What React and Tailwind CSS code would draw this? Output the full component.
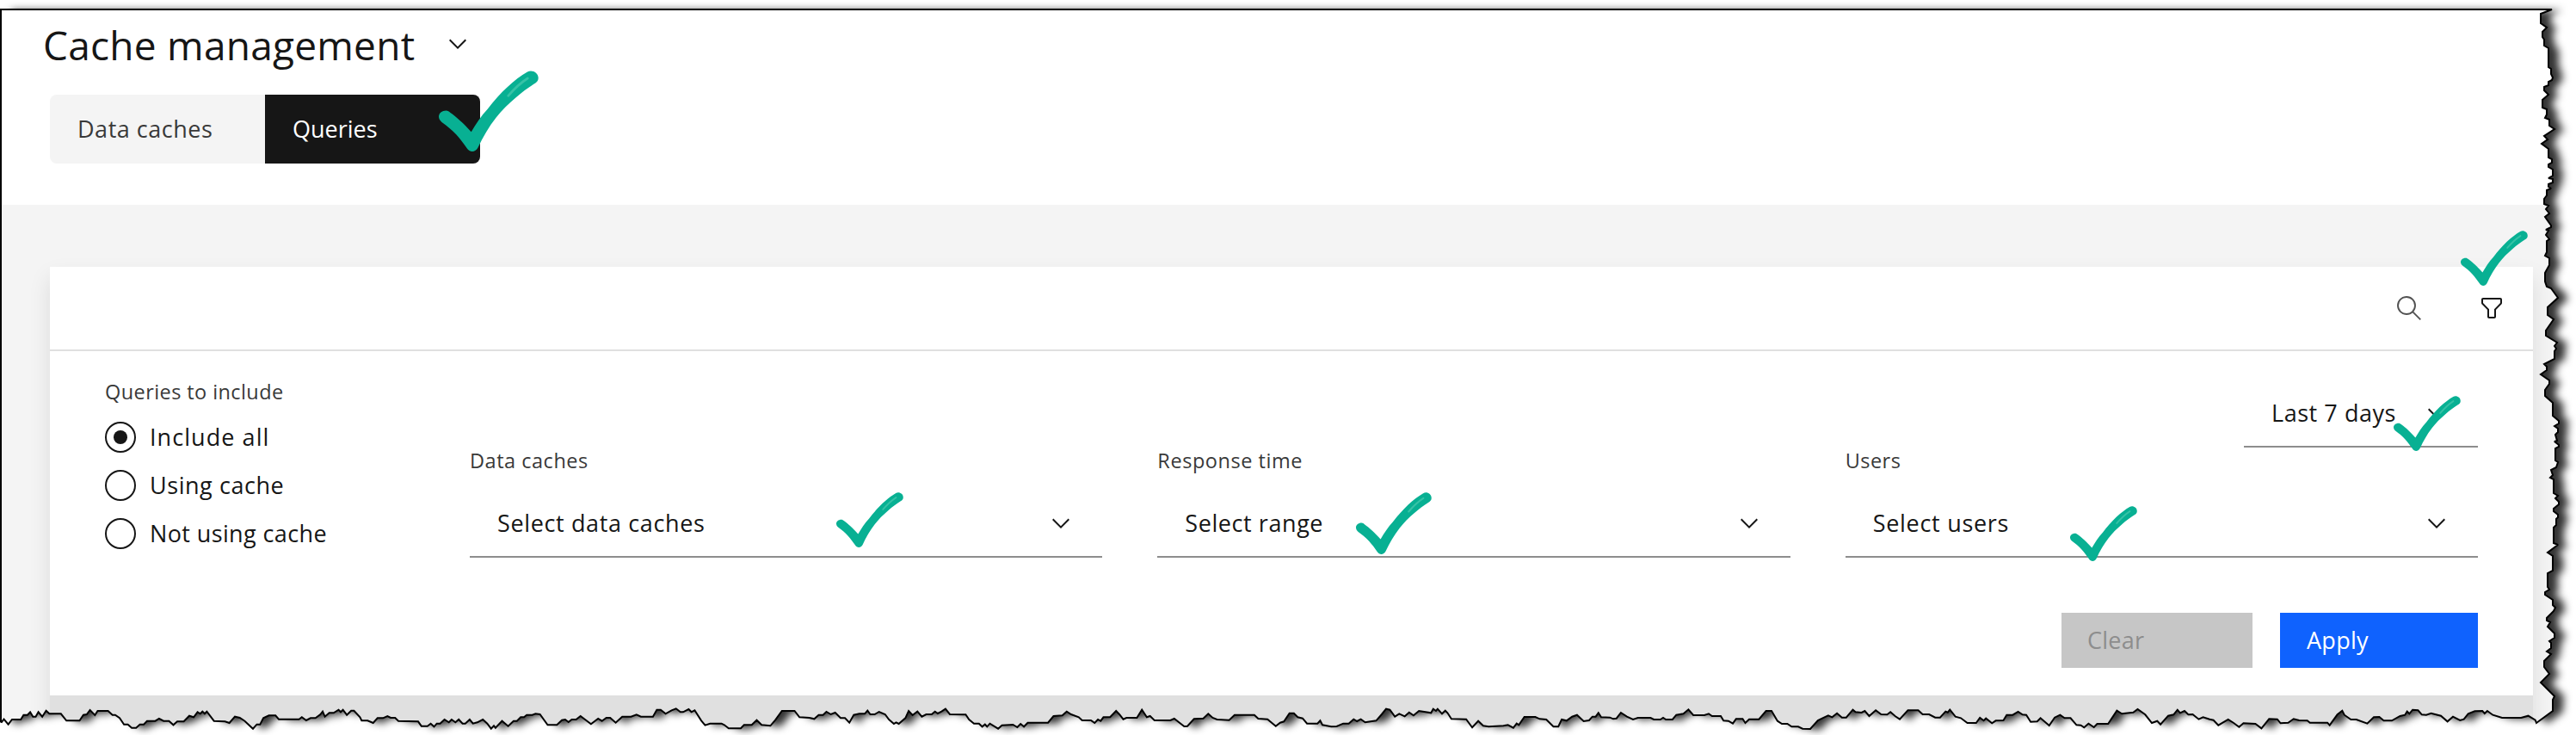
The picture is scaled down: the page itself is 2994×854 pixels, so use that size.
const RIGHT_EDGE =
  "2966,11 2953,16 2953,27 2960,32 2955,37 2955,43 2957,46 2957,53 2962,56 2962,78 2965,80 2965,86 2967,90 2966,93 2962,95 2962,99 2957,101 2957,105 2962,110 2955,116 2955,125 2960,127 2960,133 2958,137 2963,139 2963,146 2969,150 2957,158 2961,162 2954,167 2962,173 2962,183 2966,185 2966,189 2962,191 2962,194 2967,197 2967,204 2962,207 2967,208 2967,212 2962,214 2962,217 2965,219 2960,221 2960,227 2957,231 2957,237 2962,239 2959,243 2963,248 2958,252 2965,262 2965,264 2959,267 2962,268 2959,273 2963,278 2960,280 2960,293 2958,297 2963,300 2963,308 2958,317 2958,327 2960,333 2965,335 2973,346 2961,357 2961,366 2968,371 2959,384 2959,390 2972,398 2969,402 2971,405 2969,408 2969,417 2957,423 2960,426 2960,430 2953,435 2963,442 2963,446 2958,453 2958,460 2967,468 2967,483 2974,489 2974,492 2969,495 2973,498 2973,502 2970,505 2972,512 2969,513 2974,517 2974,519 2970,521 2970,535 2973,537 2971,543 2965,546 2967,552 2964,555 2968,557 2968,573 2973,576 2970,579 2974,583 2974,586 2968,591 2968,594 2973,598 2973,601 2971,603 2971,610 2968,613 2968,631 2973,633 2961,642 2967,646 2967,663 2961,666 2961,682 2963,685 2958,688 2958,691 2967,697 2967,703 2970,706 2968,710 2965,713 2960,718 2960,721 2964,723 2961,728 2969,736 2969,741 2963,745 2965,747 2965,753 2960,757 2965,760 2957,768 2957,775 2963,783 2953,793 2969,809 2967,813 2967,826";

/* Each bottom run holds x,depth pairs in its own scale; depth is in thirds of a pixel below y = 790. */
const BOTTOM_RUNS = [
  {
    start: 0,
    scale: 1.568,
    data: "0,145 3,147 7,137 15,155 22,138 38,138 43,122 50,122 55,112 60,128 65,128 70,112 77,128 84,107 90,118 111,118 121,142 145,142 152,122 158,120 164,105 173,123 178,108 197,108 205,122 210,122 218,133 226,155 233,155 240,167 248,167 255,155 262,155 268,143 283,143 290,135 298,143 308,143 316,157 323,145 335,145 345,125 353,130 360,112 365,118 369,110 373,118 377,110 390,143 410,145 418,150 428,128 437,132 446,143 461,170 468,155 474,155 480,133 490,124 502,124 508,137 545,137 550,130 558,141 566,133 575,133 584,120 588,110 592,128 600,115 608,115 617,104 621,112 625,104 632,122 640,107 645,107 656,130 659,142 670,142 680,150 688,133 698,133 706,126 712,132 720,132 726,143 762,145 768,161 779,161 785,152 791,163 796,152 802,152 810,138 818,148 823,138 830,148 836,138 843,152 848,152 856,138 862,152 870,148 880,138 888,152 895,170 900,160 903,167 915,143 926,161 936,143 942,143 949,130 955,130 960,122 970,122 976,118 984,120 998,157 1015,157 1024,140 1030,138 1036,147 1042,138 1050,138 1058,126 1077,154 1090,135 1097,143 1105,132 1112,132 1122,149 1134,128 1150,128 1160,121 1168,128 1190,128 1197,104 1204,104 1213,118 1224,106 1232,100 1240,112 1245,112 1255,102 1260,112 1266,106 1278,142 1285,158 1294,152 1315,152 1320,157 1328,169 1350,169 1356,157 1370,157 1379,140 1388,157 1404,160 1413,140 1425,108 1448,108 1457,130 1475,132 1484,136 1492,122 1500,122 1506,111 1514,120 1522,114 1532,133 1540,133 1548,149 1556,122 1566,118",
  },
  {
    start: 1000,
    scale: 1.568,
    data: "0,118 8,118 13,107 18,120 26,120 34,111 45,120 52,138 61,153 65,148 70,153 82,133 88,108 95,123 104,110 112,128 120,120 130,120 136,110 141,117 148,110 155,101 163,120 192,121 198,138 207,152 216,152 222,163 227,155 231,163 236,152 251,170 258,158 278,156 286,165 292,153 298,163 305,149 342,149 352,126 368,124 376,110 384,120 398,130 404,141 420,141 427,150 433,138 438,143 443,130 455,130 466,108 472,120 479,137 485,132 504,132 513,104 522,130 528,126 536,141 565,141 572,135 582,150 590,162 596,161 608,136 625,134 634,118 642,132 650,138 672,140 682,122 718,122 725,135 742,137 757,161 765,149 772,145 782,116 790,116 797,130 806,134 814,152 833,152 838,142 842,157 858,163 868,162 880,152 890,152 899,137 905,144 912,137 920,148 940,142 950,120 958,101 965,104 974,128 982,118 992,127 1000,113 1008,124 1018,108 1040,115 1044,101 1049,108 1052,101 1060,118 1066,107 1070,115 1077,136 1104,137 1115,166 1126,143 1135,160 1145,163 1172,160 1180,157 1190,167 1196,152 1200,157 1210,129 1230,129 1238,136 1250,138 1263,163 1272,163 1278,138 1287,142 1297,128 1306,122 1318,144 1328,141 1334,128 1340,128 1345,115 1350,130 1366,131 1372,136 1378,134 1386,114 1397,128 1408,138 1417,132 1440,132 1446,138 1458,138 1463,132 1468,138 1480,138 1487,122 1500,118 1509,103 1518,123 1538,123 1546,118 1552,126 1566,126",
  },
  {
    start: 2000,
    scale: 1.577,
    data: "0,126 5,142 14,143 22,152 28,136 40,136 45,150 52,137 70,137 83,108 93,108 104,143 112,153 122,153 130,163 142,163 150,170 164,171 178,141 190,130 197,124 204,130 213,116 222,131 230,131 242,104 247,112 258,114 264,108 272,126 284,106 294,120 305,121 311,112 320,127 328,137 343,106 362,106 370,120 382,120 393,131 402,131 412,110 416,113 420,104 430,128 440,133 452,150 468,150 475,132 482,142 486,134 497,151 504,142 518,141 524,122 535,122 545,111 553,121 560,122 568,146 580,145 586,133 602,159 612,131 622,122 630,133 641,133 652,157 660,158 666,166 674,152 684,165 690,153 710,153 726,107 735,118 756,113 764,102 778,121 790,150 800,143 806,155 820,125 830,121 837,104 842,115 850,108 857,121 865,120 876,137 884,130 896,137 903,140 912,158 930,138 940,150 950,164 958,151 980,153 991,169 1005,136 1020,137 1026,151 1040,149 1050,136 1060,141 1075,142 1080,149 1112,149 1116,158 1130,121 1139,107 1143,122 1155,138 1165,138 1185,152 1197,130 1207,129 1215,142 1230,142 1245,126 1254,122 1258,110 1262,118 1268,104 1278,106 1285,121 1293,122 1302,116 1320,125 1332,145 1342,128 1355,141 1362,137 1370,118 1382,109 1396,108 1400,117 1405,108 1415,122 1432,132 1467,132 1480,125 1493,140 1495,150",
  },
];

const parse = (s) => s.split(" ").map((p) => p.split(",").map(Number));
const bottomEdge = BOTTOM_RUNS.flatMap(({ start, scale, data }) =>
  parse(data).map(([x, d]) => [start + x / scale, 790 + d / 3])
);
const outline = [[1, 11], ...parse(RIGHT_EDGE), ...bottomEdge.reverse(), [1, 838]];
const svgPoints = outline.map(([x, y]) => `${x.toFixed(1)},${y.toFixed(1)}`).join(" ");
const clipPath = `polygon(${outline.map(([x, y]) => `${x.toFixed(1)}px ${y.toFixed(1)}px`).join(",")})`;

function Chevron() {
  return (
    <svg viewBox="0 0 32 32" className="size-8 shrink-0 fill-[#161616]" aria-hidden="true">
      <path d="M16 22 6 12l1.400-1.400L16 19.200l8.600-8.600L26 12z" />
    </svg>
  );
}

function Check({ className }) {
  return (
    <svg viewBox="0 0 116 94" preserveAspectRatio="none" className={`absolute ${className}`} aria-hidden="true">
      <path
        fill="#08b093"
        d="M13.5 49C20 53.5 29 61.5 37.7 71.3C43 62 49 53 56.7 44.7C72 25 88 10 103 1.500C108-1.500 115.700 2 115.700 8.700C115.700 12 113.500 13.800 110.700 15.600C103 20.500 97 25 90 31C81 38.500 73 46.500 66.700 54.500C58 65.500 51.500 77 45.500 89.500C42.500 95.300 36 95.500 32.500 90C28.500 84 24.500 79 20 74C15 68.500 9.500 64.500 3.500 60C-3.500 54 1 46.500 8.500 46.500C10.500 46.500 12 47.500 13.500 49Z"
      />
      <path d="M80.700 29.300C87 22 94 15 103.300 9" fill="none" stroke="#36c2a6" strokeWidth="2.800" strokeLinecap="round" />
    </svg>
  );
}

function Radio({ label, checked, spacing }) {
  return (
    <div className="flex h-9 items-center">
      <span className="flex size-9 items-center justify-center rounded-full border-2 border-[#161616]">
        {checked && <span className="size-4 rounded-full bg-[#161616]" />}
      </span>
      <span className={`ml-4 text-[27px] leading-9 text-[#161616] ${spacing}`}>{label}</span>
    </div>
  );
}

function Field({ label, value, labelSpacing, valueSpacing }) {
  return (
    <div>
      <div className={`h-[30px] text-[23.5px] leading-[30px] text-[#393939] ${labelSpacing}`}>{label}</div>
      <div className="mt-[18px] flex h-20 items-center justify-between border-b-2 border-[#8d8d8d] px-8 pt-0.5">
        <span className={`text-[27px] leading-10 text-[#161616] ${valueSpacing}`}>{value}</span>
        <Chevron />
      </div>
    </div>
  );
}

function Header() {
  return (
    <header className="h-[226px] bg-white">
      <div className="flex h-[78px] items-center pl-[50px]">
        <h1 className="w-[466px] pt-0.5 text-[46px] leading-[60px] tracking-[0.25px] whitespace-nowrap text-[#161616]">Cache management</h1>
        <Chevron />
      </div>
      <div className="mt-5 ml-[58px] flex h-20 w-[500px] overflow-hidden rounded-lg text-[27px] leading-9">
        <div className="flex w-1/2 items-center bg-[#f4f4f4] pl-8 tracking-[0.52px] text-[#393939]">Data caches</div>
        <div className="flex w-1/2 items-center bg-[#161616] pl-8 text-white">Queries</div>
      </div>
    </header>
  );
}

function FilterCard() {
  return (
    <section className="flex flex-1 flex-col bg-[#e0e0e0] shadow-[0_12px_24px_rgba(0,0,0,0.1)]">
      <div className="flex h-[98px] items-center justify-end gap-16 border-b-2 border-[#e0e0e0] bg-white pr-8">
        <svg viewBox="0 0 32 32" className="size-8 fill-none stroke-[#525252] stroke-[1.9]" aria-hidden="true">
          <circle cx="13" cy="13" r="10" />
          <path d="m20.300 20.300 9 9" />
        </svg>
        <svg viewBox="0 0 16 16" className="size-8 fill-[#161616]" aria-hidden="true">
          <path d="M9.500,14h-3c-0.600,0-1-0.400-1-1V9L2.300,5.700C2.100,5.500,2,5.300,2,5V3c0-0.600,0.400-1,1-1h10c0.600,0,1,0.400,1,1v2c0,0.300-0.100,0.500-0.300,0.700L10.500,9v4C10.500,13.600,10.100,14,9.500,14z M3,3v2l3.500,3.600V13h3V8.600L13,5V3H3z" />
        </svg>
      </div>
      <div className="flex h-[400px] bg-white px-16">
        <div className="w-[424px] pt-[31px]">
          <div className="h-8 text-[23.5px] leading-8 tracking-[0.42px] text-[#393939]">Queries to include</div>
          <div className="mt-[19px] flex flex-col gap-5">
            <Radio label="Include all" checked spacing="tracking-[1.06px]" />
            <Radio label="Using cache" spacing="tracking-[0.55px]" />
            <Radio label="Not using cache" spacing="tracking-[0.38px]" />
          </div>
        </div>
        <div className="flex flex-1 flex-col pt-8">
          <div className="flex h-20 w-[272px] items-center justify-between self-end border-b-2 border-[#8d8d8d] px-8 pt-0.5">
            <span className="text-[27px] leading-10 tracking-[0.55px] text-[#161616]">Last 7 days</span>
            <Chevron />
          </div>
          <div className="grid grid-cols-3 gap-16">
            <Field label="Data caches" value="Select data caches" labelSpacing="tracking-[0.52px]" valueSpacing="tracking-[0.63px]" />
            <Field label="Response time" value="Select range" labelSpacing="tracking-[0.55px]" valueSpacing="tracking-[0.57px]" />
            <Field label="Users" value="Select users" labelSpacing="tracking-[0.47px]" valueSpacing="tracking-[0.71px]" />
          </div>
          <div className="mt-16 flex h-16 justify-end gap-8 text-[27px]">
            <button className="w-[222px] bg-[#c6c6c6] pl-[30px] text-left tracking-[0.25px] text-[#8d8d8d]">Clear</button>
            <button className="w-[230px] bg-[#0f62fe] pl-[31px] text-left tracking-[0.27px] text-white">Apply</button>
          </div>
        </div>
      </div>
    </section>
  );
}

export default function App() {
  return (
    <div className="relative h-[854px] w-[2994px] overflow-hidden bg-white font-['Open_Sans',sans-serif]">
      <svg viewBox="0 0 2994 854" className="absolute inset-0 h-full w-full" aria-hidden="true">
        <polygon points={svgPoints} className="translate-x-[12px] translate-y-[1px] fill-black/80 blur-[5px]" />
      </svg>
      <main className="relative flex h-full flex-col bg-[#f4f4f4] pt-3" style={{ clipPath }}>
        <Header />
        <div className="flex flex-1 flex-col pt-[72px] pr-[50px] pl-[58px]">
          <FilterCard />
        </div>
        <Check className="top-[82px] left-[510px] h-[94px] w-[116px]" />
        <Check className="top-[268px] left-[2860px] h-16 w-[78px]" />
        <Check className="top-[460px] left-[2782px] h-16 w-[78px]" />
        <Check className="top-[572px] left-[972px] h-16 w-[78px]" />
        <Check className="top-[572px] left-[1576px] h-[72px] w-[88px]" />
        <Check className="top-[588px] left-[2406px] h-16 w-[78px]" />
      </main>
      <svg viewBox="0 0 2994 854" className="pointer-events-none absolute inset-0 h-full w-full" aria-hidden="true">
        <polygon points={svgPoints} fill="none" stroke="#000" strokeWidth="2" strokeLinejoin="miter" strokeMiterlimit="2" />
      </svg>
    </div>
  );
}
